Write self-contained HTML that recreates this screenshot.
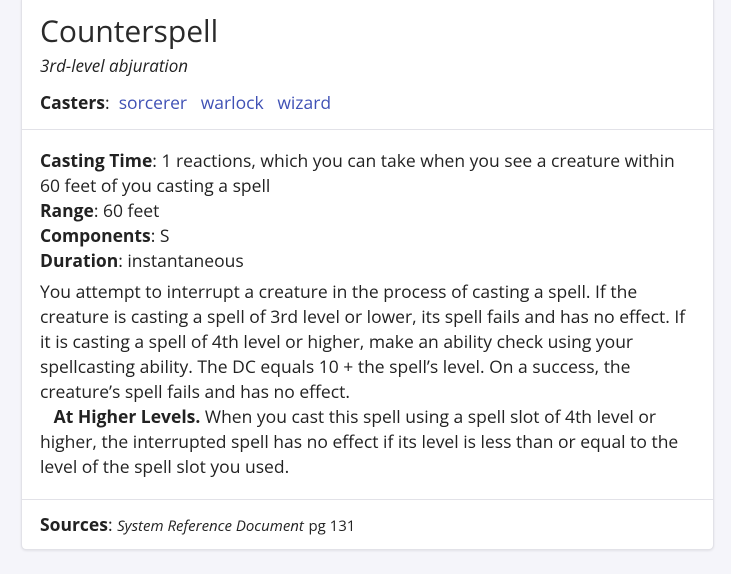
<!DOCTYPE html>
<html><head><meta charset="utf-8"><style>
body{margin:0;background:#f5f5fa;width:731px;height:574px;overflow:hidden;font-family:"Open Sans","Noto Sans","Liberation Sans",sans-serif;color:#222;}
.card{position:absolute;left:21px;top:-5px;width:691px;height:553px;background:#fff;border:1px solid #e2e2e8;border-radius:5px;box-shadow:0 1px 2px rgba(0,0,0,.08);}
.l{position:absolute;left:18px;white-space:nowrap;font-size:17.5px;line-height:25px;}
b{font-weight:bold;}
a{color:#3f51b5;text-decoration:none;}
.hr{position:absolute;left:0;width:691px;height:1px;background:#e2e2e8;}
</style></head><body>
<div class="card">
<div class="l" style="top:17px;font-size:30px;line-height:36px;color:#2a2a2a">Counterspell</div>
<div class="l" style="top:57px;font-style:italic;font-size:17px">3rd-level abjuration</div>
<div class="l" style="top:95px"><b>Casters</b>:&nbsp; <a>sorcerer</a>&nbsp;&nbsp; <a>warlock</a>&nbsp;&nbsp; <a>wizard</a></div>
<div class="hr" style="top:133px"></div>
<div class="l" style="top:153px"><b>Casting Time</b>: 1 reactions, which you can take when you see a creature within</div>
<div class="l" style="top:178px">60 feet of you casting a spell</div>
<div class="l" style="top:203px"><b>Range</b>: 60 feet</div>
<div class="l" style="top:228px"><b>Components</b>: S</div>
<div class="l" style="top:253px"><b>Duration</b>: instantaneous</div>
<div class="l" style="top:284px">You attempt to interrupt a creature in the process of casting a spell. If the</div>
<div class="l" style="top:309px">creature is casting a spell of 3rd level or lower, its spell fails and has no effect. If</div>
<div class="l" style="top:334px">it is casting a spell of 4th level or higher, make an ability check using your</div>
<div class="l" style="top:359px">spellcasting ability. The DC equals 10 + the spell’s level. On a success, the</div>
<div class="l" style="top:384px">creature’s spell fails and has no effect.</div>
<div class="l" style="top:409px">&nbsp;&nbsp; <b>At Higher Levels.</b> When you cast this spell using a spell slot of 4th level or</div>
<div class="l" style="top:434px">higher, the interrupted spell has no effect if its level is less than or equal to the</div>
<div class="l" style="top:459px">level of the spell slot you used.</div>
<div class="hr" style="top:503px"></div>
<div class="l" style="top:517px"><b>Sources</b>: <i style="font-size:15px">System Reference Document</i> <span style="font-size:15px">pg 131</span></div>
</div>
</body></html>
